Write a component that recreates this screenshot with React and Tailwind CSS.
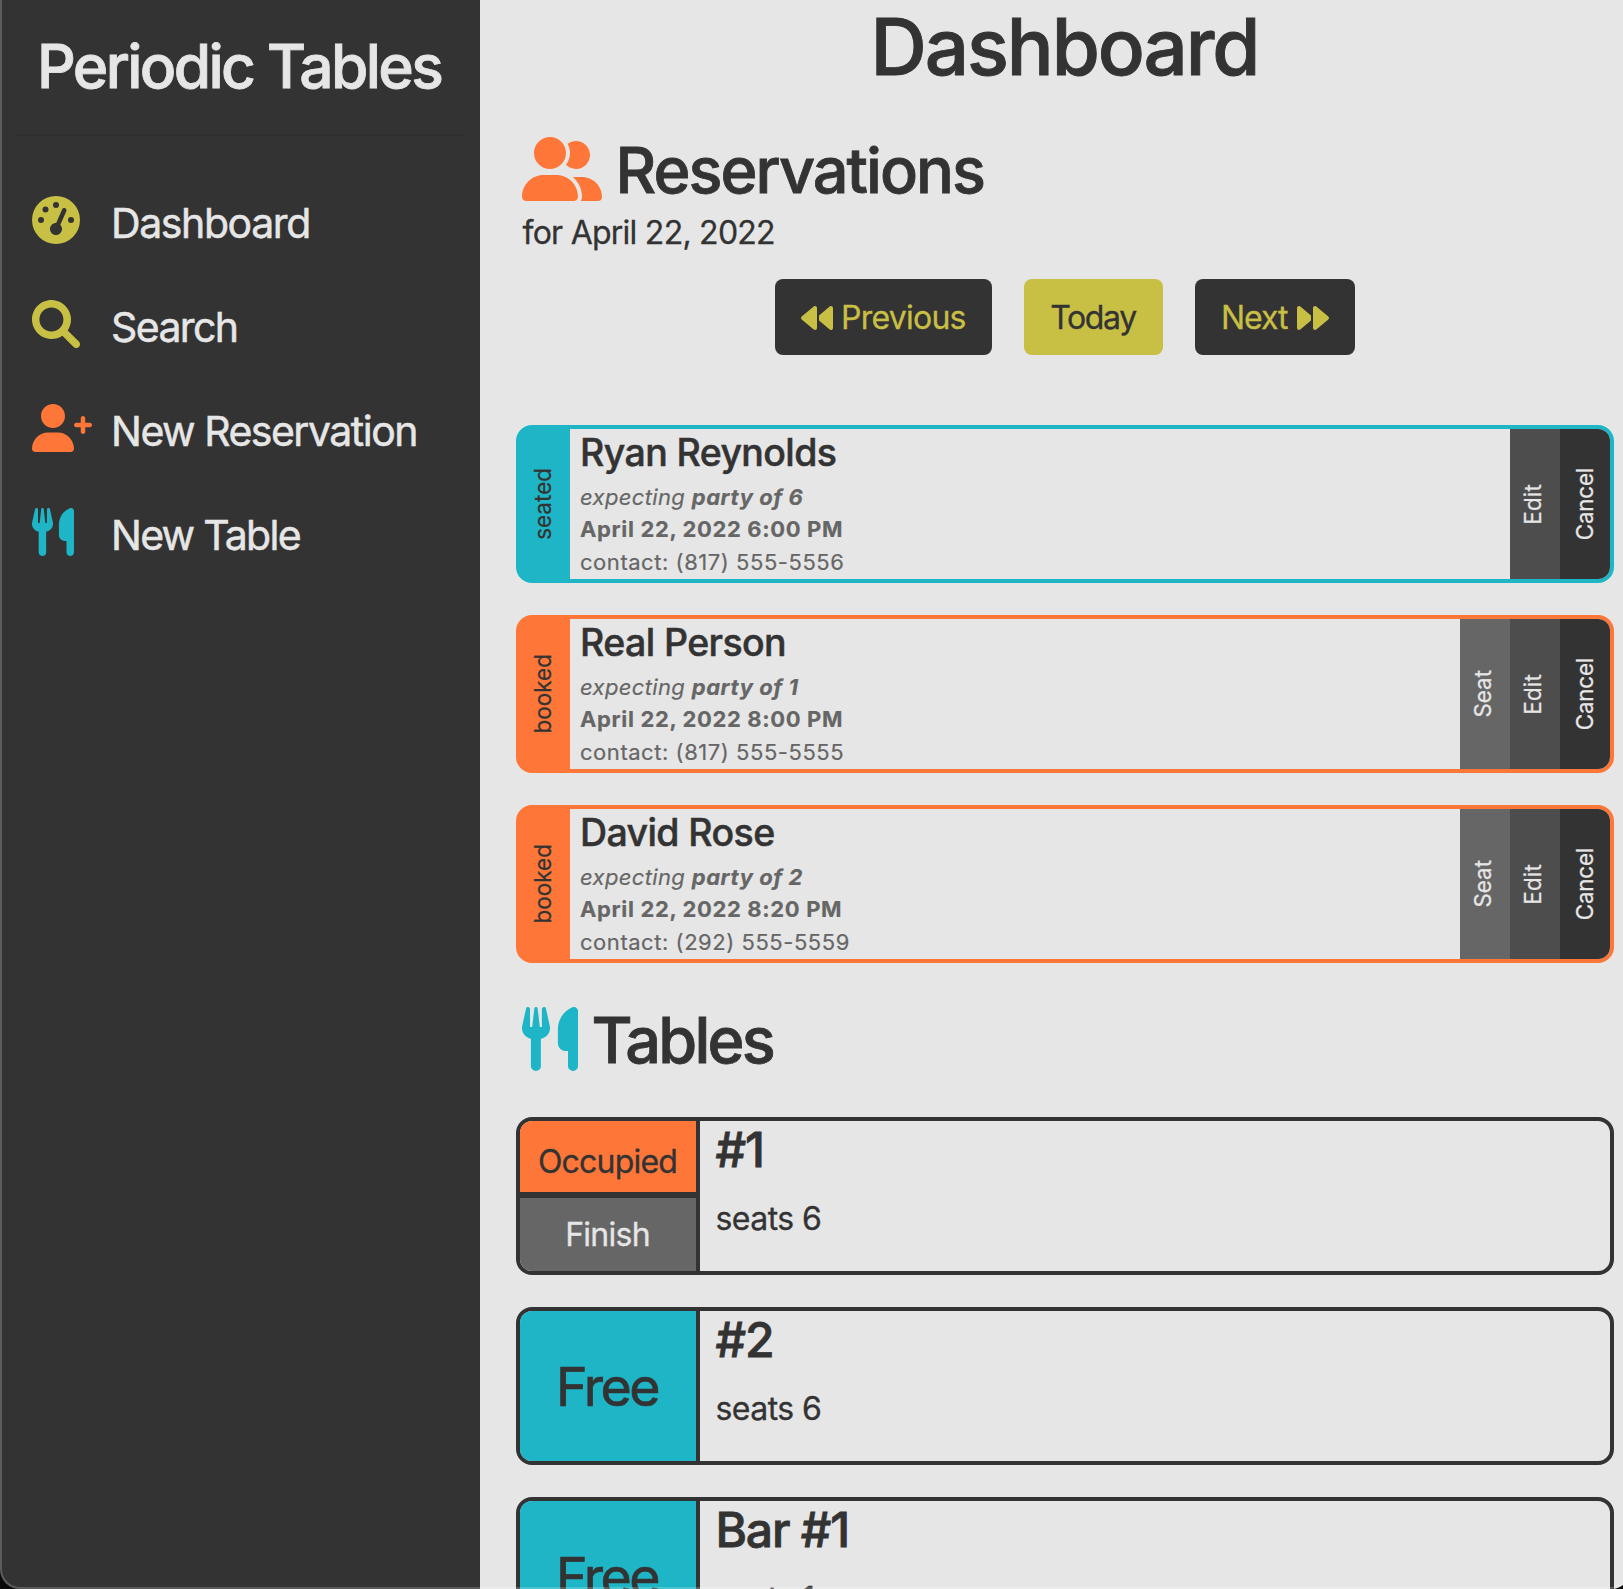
import React from "react";
import { FaGaugeHigh } from "react-icons/fa6";

function SearchIcon({ className }) {
  return (
    <svg viewBox="0 0 512 512" fill="currentColor" className={className}>
      <path d="M500.3 443.7l-119.7-119.7c27.22-40.41 40.65-90.9 33.46-144.7C401.8 87.79 326.8 13.32 235.2 1.723C99.01-15.51-15.51 99.01 1.724 235.2c11.6 91.64 86.08 166.7 177.6 178.9c53.8 7.189 104.3-6.236 144.7-33.46l119.7 119.7c15.62 15.62 40.95 15.62 56.57 0C515.9 484.7 515.9 459.3 500.3 443.7zM79.1 208c0-70.58 57.42-128 128-128s128 57.42 128 128c0 70.58-57.42 128-128 128S79.1 278.6 79.1 208z" />
    </svg>
  );
}

function UserPlusIcon({ className }) {
  return (
    <svg viewBox="0 0 640 512" fill="currentColor" className={className}>
      <path d="M224 256c70.7 0 128-57.31 128-128S294.7 0 224 0C153.3 0 96 57.3 96 128S153.3 256 224 256zM274.7 304H173.3C77.61 304 0 381.6 0 477.3c0 19.14 15.52 34.67 34.66 34.67h378.7C432.5 512 448 496.5 448 477.3C448 381.6 370.4 304 274.7 304zM616 200h-48v-48C568 138.8 557.3 128 544 128s-24 10.75-24 24v48h-48C458.8 200 448 210.8 448 224s10.75 24 24 24h48v48C520 309.3 530.8 320 544 320s24-10.75 24-24v-48h48C629.3 248 640 237.3 640 224S629.3 200 616 200z" />
    </svg>
  );
}

function UserGroupIcon({ className }) {
  return (
    <svg viewBox="0 0 640 512" fill="currentColor" className={className}>
      <path d="M224 256c70.7 0 128-57.31 128-128S294.7 0 224 0C153.3 0 96 57.3 96 128S153.3 256 224 256zM274.7 304H173.3C77.61 304 0 381.7 0 477.4C0 496.5 15.52 512 34.66 512h378.7C432.5 512 448 496.5 448 477.4C448 381.7 370.4 304 274.7 304zM479.1 320h-73.85C451.2 357.7 480 414.1 480 477.3C480 490.1 476.2 501.9 470 512h138C625.7 512 640 497.6 640 479.1C640 391.6 568.4 320 479.1 320zM432 256C493.9 256 544 205.9 544 144S493.9 32 432 32c-25.11 0-48.04 8.555-66.72 22.51C376.8 76.63 384 101.4 384 128c0 35.52-11.93 68.14-31.59 94.71C372.7 243.2 400.8 256 432 256z" />
    </svg>
  );
}

function UtensilsIcon({ className }) {
  return (
    <svg viewBox="0 0 448 512" fill="currentColor" className={className}>
      <path d="M221.6 148.7C224.7 161.3 224.8 174.5 222.1 187.2C219.3 199.1 213.6 211.9 205.6 222.1C191.1 238.6 173 249.1 151.1 254.1V472C151.1 482.6 147.8 492.8 140.3 500.3C132.8 507.8 122.6 512 111.1 512C101.4 512 91.22 507.8 83.71 500.3C76.21 492.8 71.1 482.6 71.1 472V254.1C50.96 250.1 31.96 238.9 18.3 222.4C10.19 212.2 4.529 199.3 1.755 187.5C-1.019 174.7-.8315 161.5 2.303 148.8L32.51 12.45C33.36 8.598 35.61 5.197 38.82 2.9C42.02 .602 45.97-.4297 49.89 .0026C53.82 .4302 57.46 2.303 60.1 5.259C62.74 8.214 64.18 12.04 64.16 16V160H81.53L98.62 11.91C99.02 8.635 100.6 5.621 103.1 3.434C105.5 1.248 108.7 .0401 111.1 .0401C115.3 .0401 118.5 1.248 120.9 3.434C123.4 5.621 124.1 8.635 125.4 11.91L142.5 160H159.1V16C159.1 12.07 161.4 8.268 163.1 5.317C166.6 2.366 170.2 .474 174.1 .0026C178-.4262 181.1 .619 185.2 2.936C188.4 5.253 190.6 8.677 191.5 12.55L221.6 148.7zM448 472C448 482.6 443.8 492.8 436.3 500.3C428.8 507.8 418.6 512 408 512C397.4 512 387.2 507.8 379.7 500.3C372.2 492.8 368 482.6 368 472V352H351.2C342.8 352 334.4 350.3 326.6 347.1C318.9 343.8 311.8 339.1 305.8 333.1C299.9 327.1 295.2 320 291.1 312.2C288.8 304.4 287.2 296 287.2 287.6L287.1 173.8C288 136.9 299.1 100.8 319.8 70.28C340.5 39.71 369.8 16.05 404.1 2.339C408.1 .401 414.2-.3202 419.4 .2391C424.6 .7982 429.6 2.62 433.9 5.546C438.2 8.472 441.8 12.41 444.2 17.03C446.7 21.64 447.1 26.78 448 32V472z" />
    </svg>
  );
}

function BackwardIcon({ className }) {
  return (
    <svg viewBox="0 0 512 512" fill="currentColor" className={className}>
      <path d="M459.5 71.41l-171.5 142.9v83.45l171.5 142.9C480.1 457.7 512 443.3 512 415.1V96.03C512 68.66 480.1 54.28 459.5 71.41zM203.5 71.41L11.44 231.4c-15.25 12.87-15.25 36.37 0 49.24l192 159.1c20.63 17.12 52.51 2.749 52.51-24.62v-319.9C255.1 68.66 224.1 54.28 203.5 71.41z" />
    </svg>
  );
}

const navItems = [
  { label: "Dashboard", tracking: "tracking-[-1.4px]", icon: <FaGaugeHigh className="size-12 text-[#c8bf45]" /> },
  { label: "Search", tracking: "tracking-[-1.6px]", icon: <SearchIcon className="size-12 text-[#c8bf45]" /> },
  { label: "New Reservation", tracking: "tracking-[-1.5px]", icon: <UserPlusIcon className="h-12 w-[60px] text-[#ff7738]" /> },
  { label: "New Table", tracking: "tracking-[-1.75px]", icon: <UtensilsIcon className="h-12 w-[42px] text-[#1eb6c6]" /> },
];

const reservations = [
  { name: "Ryan Reynolds", party: 6, time: "April 22, 2022 6:00 PM", phone: "(817) 555-5556", status: "seated" },
  { name: "Real Person", party: 1, time: "April 22, 2022 8:00 PM", phone: "(817) 555-5555", status: "booked" },
  { name: "David Rose", party: 2, time: "April 22, 2022 8:20 PM", phone: "(292) 555-5559", status: "booked" },
];

const tables = [
  { name: "#1", seats: 6, occupied: true },
  { name: "#2", seats: 6, occupied: false },
  { name: "Bar #1", seats: 1, occupied: false },
];

function Sidebar() {
  return (
    <aside className="w-[480px] shrink-0 bg-[#333333] px-4 pt-9 text-[#e6e6e6]">
      <h2 className="pl-[21px] text-[60.5px] leading-[60px] font-medium tracking-[-2.64px] whitespace-nowrap [-webkit-text-stroke:0.8px_currentColor]">
        Periodic Tables
      </h2>
      <hr className="mt-[38px] border-0 border-t-2 border-[#2e2e2e]" />
      <nav className="mt-[60px] flex flex-col gap-14 pl-4">
        {navItems.map((item) => (
          <a key={item.label} className="flex h-12 items-center">
            <span className="w-[79px] shrink-0">{item.icon}</span>
            <span
              className={`mt-1.5 text-[41px] leading-[42px] whitespace-nowrap [-webkit-text-stroke:0.5px_currentColor] ${item.tracking}`}
            >
              {item.label}
            </span>
          </a>
        ))}
      </nav>
    </aside>
  );
}

function VerticalLabel({ children, className }) {
  return (
    <span
      className={`rotate-180 text-[22.4px] leading-[26px] [writing-mode:vertical-rl] [-webkit-text-stroke:0.25px_currentColor] ${className}`}
    >
      {children}
    </span>
  );
}

function ReservationCard({ reservation }) {
  const seated = reservation.status === "seated";
  return (
    <article
      className={`flex h-[158px] overflow-hidden rounded-2xl border-4 ${seated ? "border-[#1eb6c6] bg-[linear-gradient(90deg,#1eb6c6_50px,transparent_50px)]" : "border-[#ff7738] bg-[linear-gradient(90deg,#ff7738_50px,transparent_50px)]"}`}
    >
      <div className="flex w-[50px] shrink-0 items-center justify-center pr-1">
        <VerticalLabel className="tracking-[0.05px]">{reservation.status}</VerticalLabel>
      </div>
      <div className="grow pt-px pl-2.5 text-[22px] whitespace-nowrap text-[#666666] [-webkit-text-stroke:0.2px_currentColor]">
        <h4 className="text-[37.5px] leading-[46px] font-medium tracking-[-0.6px] text-[#333333] [-webkit-text-stroke:0.5px_currentColor]">
          {reservation.name}
        </h4>
        <p className="mt-[5px] leading-8 tracking-[0.36px] italic">
          expecting <b className="font-bold tracking-[0.55px]">party of {reservation.party}</b>
        </p>
        <p className="leading-8 font-bold tracking-[0.64px]">{reservation.time}</p>
        <p className="leading-[34px] tracking-[0.54px]">contact: {reservation.phone}</p>
      </div>
      <div className="flex text-[#e6e6e6]">
        {!seated && (
          <button className="flex w-[50px] items-center justify-center bg-[#666666] pr-1">
            <VerticalLabel>Seat</VerticalLabel>
          </button>
        )}
        <button className="flex w-[50px] items-center justify-center bg-[#4d4d4d] pr-1">
          <VerticalLabel className="tracking-[0.2px]">Edit</VerticalLabel>
        </button>
        <button className="flex w-[50px] items-center justify-center bg-[#333333]">
          <VerticalLabel className="tracking-[-0.2px]">Cancel</VerticalLabel>
        </button>
      </div>
    </article>
  );
}

function TableCard({ table }) {
  return (
    <article className="flex h-[158px] overflow-hidden rounded-2xl border-4 border-[#333333] [-webkit-text-stroke:0.3px_currentColor]">
      <div className="flex w-[180px] shrink-0 flex-col border-r-4 border-[#333333] text-center">
        {table.occupied ? (
          <>
            <div className="h-[77px] border-b-6 border-[#333333] bg-[#ff7738] pt-[21px] pr-px text-[32px] leading-10 tracking-[-0.8px]">
              Occupied
            </div>
            <button className="grow bg-[#666666] pr-px text-[32px] leading-10 tracking-[-0.74px] text-[#e6e6e6]">
              Finish
            </button>
          </>
        ) : (
          <div className="flex grow items-center justify-center bg-[#1eb6c6] pt-0.5 pr-0.5 text-[53.6px] leading-[60px] tracking-[-2.5px] [-webkit-text-stroke:0.7px_currentColor]">
            Free
          </div>
        )}
      </div>
      <div className="pt-px pl-[15.5px] whitespace-nowrap">
        <h3 className="text-[48px] leading-[56px] font-medium tracking-[-1.2px] [-webkit-text-stroke:0.8px_currentColor]">
          {table.name}
        </h3>
        <p className="mt-[21px] text-[32px] leading-10 tracking-[-0.55px]">seats {table.seats}</p>
      </div>
    </article>
  );
}

export default function App() {
  return (
    <div className="relative flex h-[1589px] w-[1623px] overflow-hidden bg-[#e6e6e6] font-['Inter',sans-serif] text-[#333333]">
      <Sidebar />
      <main className="min-w-0 grow pt-2 pr-[9px] pl-9">
        <h1 className="pr-px text-center text-[78px] leading-[78px] font-medium tracking-[-2.1px] [-webkit-text-stroke:0.9px_currentColor]">
          Dashboard
        </h1>

        <div className="mt-[51px] flex h-16 items-center gap-[13px] pl-[6.4px]">
          <UserGroupIcon className="h-16 w-20 text-[#ff7738]" />
          <h2 className="mt-0.5 text-[63px] leading-[64px] font-medium tracking-[-1.95px] [-webkit-text-stroke:0.8px_currentColor]">
            Reservations
          </h2>
        </div>
        <p className="mt-3 pl-[6.5px] text-[32px] leading-10 tracking-[-0.75px] [-webkit-text-stroke:0.3px_currentColor]">
          for April 22, 2022
        </p>

        <div className="mt-[26px] flex justify-center gap-8 text-[32px] leading-10 [-webkit-text-stroke:0.3px_currentColor]">
          <button className="flex h-[76px] w-[217px] items-center gap-2 rounded-lg bg-[#333333] pt-px pl-[26px] text-[#c8bf45]">
            <BackwardIcon className="size-8 shrink-0" />
            <span className="mt-px tracking-[-0.75px]">Previous</span>
          </button>
          <button className="h-[76px] w-[139px] rounded-lg bg-[#c8bf45] pt-0.5 pr-px tracking-[-1.35px]">Today</button>
          <button className="flex h-[76px] w-40 items-center gap-2.5 rounded-lg bg-[#333333] pt-px pl-[26px] text-[#c8bf45]">
            <span className="mt-px tracking-[-1.05px]">Next</span>
            <BackwardIcon className="size-8 shrink-0 rotate-180" />
          </button>
        </div>

        <section className="mt-[70px] flex flex-col gap-8">
          {reservations.map((r) => (
            <ReservationCard key={r.name} reservation={r} />
          ))}
        </section>

        <div className="mt-11 flex h-16 items-center gap-[13px] pl-[6.4px]">
          <UtensilsIcon className="h-16 w-14 text-[#1eb6c6]" />
          <h2 className="mt-0.5 text-[63px] leading-[64px] font-medium tracking-[-2.75px] [-webkit-text-stroke:0.8px_currentColor]">
            Tables
          </h2>
        </div>

        <section className="mt-[46px] flex flex-col gap-8">
          {tables.map((t) => (
            <TableCard key={t.name} table={t} />
          ))}
        </section>
      </main>

      <div className="pointer-events-none absolute inset-y-0 -right-2 left-0 rounded-b-[20px] border-b-2 border-l-2 border-white/20 shadow-[0_0_0_20px_#0a0a0a]" />
    </div>
  );
}
